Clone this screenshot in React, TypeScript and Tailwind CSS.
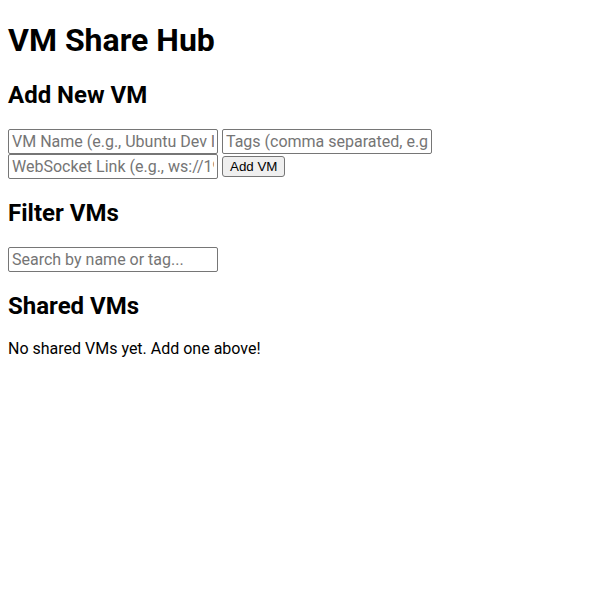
import React, { useState } from 'react';

type VM = { name: string; tags: string[]; link: string };

const App: React.FC = () => {
  const [vms, setVms] = useState<VM[]>([]);
  const [name, setName] = useState('');
  const [tags, setTags] = useState('');
  const [link, setLink] = useState('');
  const [search, setSearch] = useState('');

  const addVm = (e: React.FormEvent) => {
    e.preventDefault();
    if (!name || !link) return;
    setVms((prev) => [
      ...prev,
      { name, link, tags: tags.split(',').map((t) => t.trim()).filter(Boolean) },
    ]);
    setName('');
    setTags('');
    setLink('');
  };

  const q = search.toLowerCase();
  const filtered = vms.filter(
    (vm) => vm.name.toLowerCase().includes(q) || vm.tags.some((t) => t.toLowerCase().includes(q))
  );

  const inputCls =
    'w-[210px] h-[25px] border border-[#767676] rounded-[2px] px-[3px] text-[16px] leading-[normal] text-black placeholder:text-[#757575] bg-white';

  return (
    <div className="px-2 leading-[normal] text-black bg-white min-h-screen" style={{ fontFamily: 'Roboto, sans-serif' }}>
      <h1 className="text-[32px] leading-[normal] font-bold my-[21.44px]">VM Share Hub</h1>

      {/* Add form */}
      <h2 className="text-[24px] leading-[normal] font-bold my-[19.92px]">Add New VM</h2>
      <form onSubmit={addVm} className="flex flex-wrap items-center gap-x-[4px] max-w-[584px]">
        <input className={inputCls} placeholder="VM Name (e.g., Ubuntu Dev Instance)" value={name} onChange={(e) => setName(e.target.value)} />
        <input className={inputCls} placeholder="Tags (comma separated, e.g., linux, dev)" value={tags} onChange={(e) => setTags(e.target.value)} />
        <input className={inputCls} placeholder="WebSocket Link (e.g., ws://192.168.1.10:8080)" value={link} onChange={(e) => setLink(e.target.value)} />
        <button
          type="submit"
          className="h-[21px] px-[7px] border border-[#767676] rounded-[3px] bg-[#efefef] text-[13.33px] leading-none"
          style={{ fontFamily: '"Liberation Sans", Arial, sans-serif' }}
        >
          Add VM
        </button>
      </form>

      {/* Filter */}
      <h2 className="text-[24px] leading-[normal] font-bold my-[19.92px]">Filter VMs</h2>
      <input className={inputCls} placeholder="Search by name or tag..." value={search} onChange={(e) => setSearch(e.target.value)} />

      <h2 className="text-[24px] leading-[normal] font-bold my-[19.92px]">Shared VMs</h2>
      {filtered.length === 0 ? (
        <p className="my-4 text-[16px]">No shared VMs yet. Add one above!</p>
      ) : (
        <ul>
          {filtered.map((vm, i) => (
            <li key={i}>
              {vm.name} — {vm.link}
            </li>
          ))}
        </ul>
      )}
    </div>
  );
};

export default App;
